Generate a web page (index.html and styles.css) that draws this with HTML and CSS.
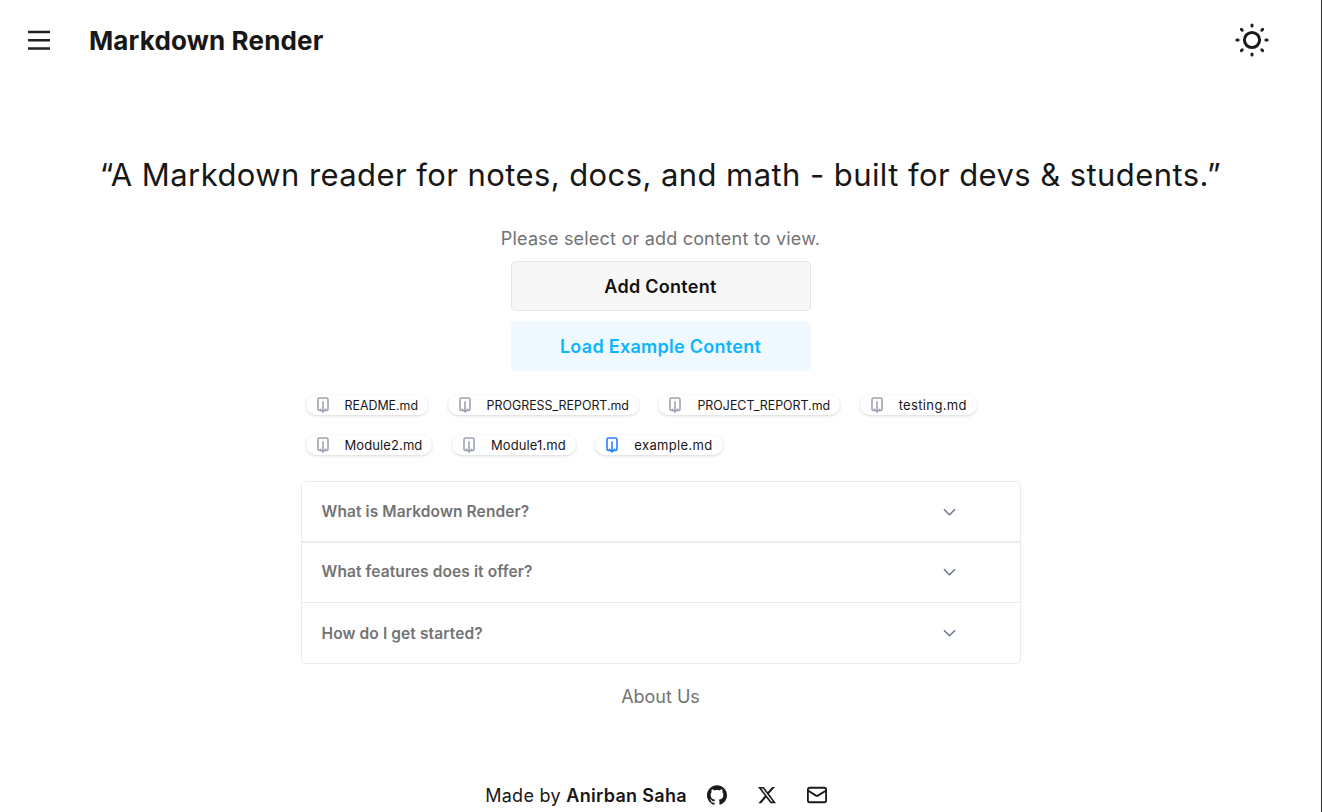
FILE: index.html
```html
<!DOCTYPE html>
<html lang="en">
  <head>
    <meta charset="UTF-8" />
    <meta name="viewport" content="width=device-width, initial-scale=1.0" />
    <title>Markdown Render</title>
    <link rel="stylesheet" href="styles.css">
  </head>
  <body>
    <svg class="defs" width="0" height="0">
      <symbol id="file_down" viewBox="0 0 12 16">
        <path d="M3.400 13.500H2.500A1.500 1.500 0 0 1 1 12V2.500A1.500 1.500 0 0 1 2.500 1h7A1.500 1.500 0 0 1 11 2.500V12a1.500 1.500 0 0 1-1.500 1.500h-.9" />
        <path d="M6 5v10M3.400 12.400 6 15l2.600-2.600" />
      </symbol>
      <symbol id="chevron_down" viewBox="0 0 14 8">
        <path d="M1 1l6 6 6-6" />
      </symbol>
    </svg>
    <div id="root">
      <header class="topbar">
        <div class="topbar_left">
          <button class="icon_btn" type="button" aria-label="Menu">
            <svg width="24" height="24" viewBox="0 0 24 24" fill="none" stroke="#222" stroke-width="2.500">
              <path d="M1 4h22M1 12.300h22M1 20.500h22" />
            </svg>
          </button>
          <h1 class="brand">Markdown Render</h1>
        </div>
        <button class="icon_btn" type="button" aria-label="Theme">
          <svg width="36" height="36" viewBox="0 0 36 36" fill="none" stroke="#1a1a1a" stroke-linecap="round">
            <circle cx="18" cy="18" r="7.600" stroke-width="3" />
            <path stroke-width="3" d="M18 2.900v1.200M18 31.900v1.200M2.900 18h1.200M31.900 18h1.200M7.400 7.400l.8.8M27.800 27.800l.8.8M7.400 28.600l.8-.8M27.800 8.200l.8-.8" />
          </svg>
        </button>
      </header>

      <main class="content">
        <h2 class="tagline">“A Markdown reader for notes, docs, and math - built for devs &amp; students.”</h2>
        <p class="hint">Please select or add content to view.</p>
        <button class="action_btn add_btn" type="button">Add Content</button>
        <button class="action_btn example_btn" type="button">Load Example Content</button>

        <ul class="file_list">
          <li class="file_chip upper_name">
            <svg class="file_icon"><use href="#file_down" /></svg>
            <span>README.md</span>
          </li>
          <li class="file_chip upper_name">
            <svg class="file_icon"><use href="#file_down" /></svg>
            <span>PROGRESS_REPORT.md</span>
          </li>
          <li class="file_chip upper_name">
            <svg class="file_icon"><use href="#file_down" /></svg>
            <span>PROJECT_REPORT.md</span>
          </li>
          <li class="file_chip wide_name">
            <svg class="file_icon"><use href="#file_down" /></svg>
            <span>testing.md</span>
          </li>
          <li class="file_chip">
            <svg class="file_icon"><use href="#file_down" /></svg>
            <span>Module2.md</span>
          </li>
          <li class="file_chip">
            <svg class="file_icon"><use href="#file_down" /></svg>
            <span>Module1.md</span>
          </li>
          <li class="file_chip wide_name active">
            <svg class="file_icon"><use href="#file_down" /></svg>
            <span>example.md</span>
          </li>
        </ul>

        <div class="faq">
          <div class="faq_row faq_first">
            <span>What is Markdown Render?</span>
            <svg class="chevron"><use href="#chevron_down" /></svg>
          </div>
          <div class="faq_row faq_second">
            <span>What features does it offer?</span>
            <svg class="chevron"><use href="#chevron_down" /></svg>
          </div>
          <div class="faq_row">
            <span>How do I get started?</span>
            <svg class="chevron"><use href="#chevron_down" /></svg>
          </div>
        </div>

        <a class="about_link" href="#">About Us</a>
      </main>

      <footer class="footer">
        <span class="made_by">Made by <b>Anirban Saha</b></span>
        <div class="socials">
          <svg width="20" height="20" viewBox="0 0 24 24" fill="#1a1a1a">
            <path d="M12 .297c-6.630 0-12 5.373-12 12 0 5.303 3.438 9.800 8.205 11.385.6.113.82-.258.82-.577 0-.285-.01-1.040-.015-2.040-3.338.724-4.042-1.610-4.042-1.610C4.422 18.070 3.633 17.700 3.633 17.700c-1.087-.744.084-.729.084-.729 1.205.084 1.838 1.236 1.838 1.236 1.070 1.835 2.809 1.305 3.495.998.108-.776.417-1.305.76-1.605-2.665-.3-5.466-1.332-5.466-5.930 0-1.310.465-2.380 1.235-3.220-.135-.303-.54-1.523.105-3.176 0 0 1.005-.322 3.300 1.230.96-.267 1.980-.399 3-.405 1.020.006 2.040.138 3 .405 2.280-1.552 3.285-1.230 3.285-1.230.645 1.653.24 2.873.12 3.176.765.84 1.230 1.910 1.230 3.220 0 4.610-2.805 5.625-5.475 5.920.42.36.81 1.096.81 2.220 0 1.606-.015 2.896-.015 3.286 0 .315.21.69.825.57C20.565 22.092 24 17.592 24 12.297c0-6.627-5.373-12-12-12" />
          </svg>
          <svg width="20" height="20" viewBox="0 0 24 24" fill="#1a1a1a">
            <path d="M18.244 2.250h3.308l-7.227 8.260 8.502 11.240H16.170l-5.214-6.817L4.990 21.750H1.680l7.730-8.835L1.254 2.250H8.080l4.713 6.231zm-1.161 17.520h1.833L7.084 4.126H5.117z" />
          </svg>
          <svg width="20" height="20" viewBox="1 1 22 22" fill="none" stroke="#1a1a1a" stroke-width="2" stroke-linecap="round" stroke-linejoin="round">
            <rect x="2" y="4" width="20" height="16" rx="2" />
            <path d="m22 7-8.970 5.700a1.940 1.940 0 0 1-2.060 0L2 7" />
          </svg>
        </div>
      </footer>
    </div>
  </body>
</html>
```

FILE: styles.css
```css
html,
body {
  margin: 0;
  height: 100%;
}
body {
  background-color: #fff;
  color: #171717;
  font-family: Inter, "Open Sans", sans-serif;
  border-right: 1px solid #2a2a2a;
  box-sizing: border-box;
  overflow: hidden;
}
#root {
  display: flex;
  flex-direction: column;
  height: 812px;
}
button {
  font-family: inherit;
}
.defs {
  display: block;
}

.topbar {
  display: flex;
  justify-content: space-between;
  align-items: center;
  height: 80px;
  padding: 0 51px 0 27px;
}
.topbar_left {
  display: flex;
  align-items: center;
  gap: 38px;
}
.icon_btn {
  display: flex;
  padding: 0;
  border: 0;
  background: none;
}
.brand {
  margin: 0;
  font-size: 26px;
  font-weight: 700;
  letter-spacing: 0.15px;
  color: #171717;
}

.content {
  display: flex;
  flex-direction: column;
  align-items: center;
  width: 720px;
  margin: 0 auto;
  padding-top: 72px;
}
.tagline {
  margin: 0;
  width: 1200px;
  text-align: center;
  font-size: 31px;
  line-height: 45px;
  font-weight: 400;
  letter-spacing: 0.42px;
  white-space: nowrap;
  color: #171717;
}
.hint {
  margin: 30px 0 0;
  font-size: 18px;
  line-height: 24px;
  letter-spacing: 0.2px;
  color: #737373;
}
.action_btn {
  width: 300px;
  height: 50px;
  border-radius: 5px;
  font-size: 18px;
  font-weight: 600;
  letter-spacing: 0.28px;
}
.add_btn {
  margin-top: 10px;
  background-color: #f7f7f7;
  border: 1px solid #e5e5e5;
  color: #111;
}
.example_btn {
  margin-top: 10px;
  background-color: #f0f9ff;
  border: 0;
  color: #0ab4ff;
}

.file_list {
  display: flex;
  flex-wrap: wrap;
  gap: 20px 19.5px;
  align-self: stretch;
  margin: 24px 0 0;
  padding: 0 5px;
  list-style: none;
}
.file_chip {
  display: flex;
  align-items: center;
  gap: 16px;
  height: 20px;
  padding: 0 10px 0 11px;
  border-radius: 10px;
  background-color: #fff;
  box-shadow: 0 1px 3px rgba(0, 0, 0, 0.16);
  font-size: 13px;
  letter-spacing: 0.1px;
  color: #171717;
}
.upper_name {
  font-size: 12.4px;
  letter-spacing: 0;
}
.wide_name {
  letter-spacing: 0.35px;
}
.file_icon {
  width: 12px;
  height: 16px;
  fill: none;
  stroke: #9ca3af;
  stroke-width: 1.6;
  stroke-linecap: round;
  stroke-linejoin: round;
}
.active .file_icon {
  stroke: #2b7fff;
}

.faq {
  margin-top: 26px;
  align-self: stretch;
  border: 1px solid #ececec;
  border-radius: 5px;
}
.faq_row {
  display: flex;
  justify-content: space-between;
  align-items: center;
  box-sizing: border-box;
  height: 60px;
  padding: 0 64px 0 20px;
  font-size: 15.5px;
  font-weight: 600;
  letter-spacing: 0.1px;
  color: #737373;
}
.faq_first {
  height: 61px;
  border-bottom: 2px solid #ececec;
}
.faq_second {
  padding-bottom: 2px;
  border-bottom: 1px solid #ececec;
}
.chevron {
  width: 13px;
  height: 8px;
  fill: none;
  stroke: #64748b;
  stroke-width: 1.5;
}
.about_link {
  margin-top: 19px;
  font-size: 18px;
  line-height: 27px;
  color: #737373;
  text-decoration: none;
}

.footer {
  display: flex;
  justify-content: center;
  align-items: center;
  gap: 20px;
  margin-top: auto;
  height: 34px;
  padding-right: 9px;
}
.made_by {
  font-size: 18px;
  letter-spacing: 0.3px;
}
.made_by b {
  font-weight: 600;
}
.socials {
  display: flex;
  gap: 30px;
}
```
